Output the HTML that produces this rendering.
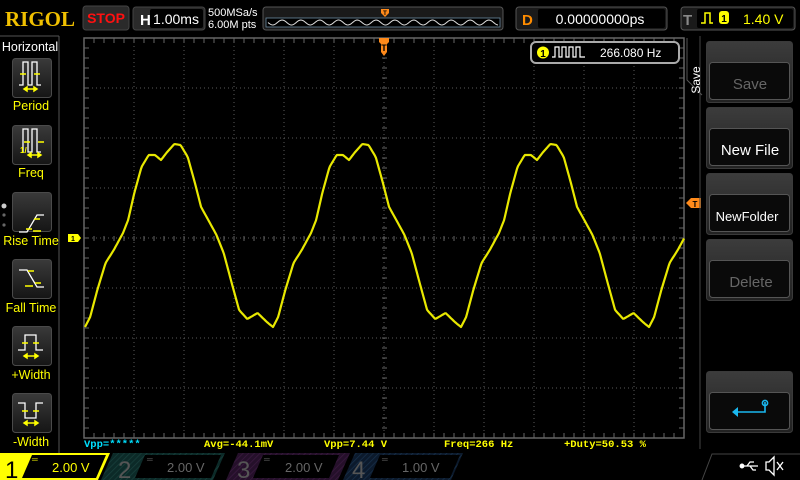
<!DOCTYPE html>
<html><head><meta charset="utf-8"><style>
html,body{margin:0;padding:0;background:#000;width:800px;height:480px;overflow:hidden}
svg{display:block}
text{font-family:"Liberation Sans",sans-serif}
.m{font-family:"Liberation Mono",monospace;font-size:10.5px;font-weight:bold}
</style></head><body>
<svg id="s" width="800" height="480" viewBox="0 0 800 480" xmlns="http://www.w3.org/2000/svg">
<defs>
<linearGradient id="bg" x1="0" y1="0" x2="0" y2="1"><stop offset="0" stop-color="#3a3a3a"/><stop offset="1" stop-color="#151515"/></linearGradient>
<linearGradient id="hd" x1="0" y1="0" x2="0" y2="1"><stop offset="0" stop-color="#3c3c3c"/><stop offset="1" stop-color="#222"/></linearGradient>
<pattern id="h2" width="4" height="4" patternUnits="userSpaceOnUse" patternTransform="rotate(45)"><rect width="4" height="4" fill="#0c2a28"/><line x1="0" y1="0" x2="0" y2="4" stroke="#18403c" stroke-width="1.5"/></pattern>
<pattern id="h3" width="4" height="4" patternUnits="userSpaceOnUse" patternTransform="rotate(45)"><rect width="4" height="4" fill="#25102a"/><line x1="0" y1="0" x2="0" y2="4" stroke="#3a1a40" stroke-width="1.5"/></pattern>
<pattern id="h4" width="4" height="4" patternUnits="userSpaceOnUse" patternTransform="rotate(45)"><rect width="4" height="4" fill="#0c1a2c"/><line x1="0" y1="0" x2="0" y2="4" stroke="#18304a" stroke-width="1.5"/></pattern>
</defs>
<rect width="800" height="480" fill="#000"/>
<!-- top bar -->
<text x="5" y="26" font-weight="bold" font-size="21" fill="#f0c000" style="font-family:'Liberation Serif',serif">RIGOL</text>
<rect x="83" y="6" width="46" height="24" rx="3" fill="#2a2a2a" stroke="#444"/>
<text x="106" y="23" text-anchor="middle" font-size="14" font-weight="bold" fill="#ff1010">STOP</text>
<rect x="133" y="7" width="72" height="23" rx="3" fill="#2a2a2a" stroke="#444"/>
<text x="140" y="25" font-size="15" font-weight="bold" fill="#fff">H</text>
<rect x="150" y="9" width="53" height="19" rx="2" fill="#000"/>
<text x="176" y="24" text-anchor="middle" font-size="14" fill="#fff">1.00ms</text>
<text x="208" y="16" font-size="11" fill="#fff">500MSa/s</text>
<text x="208" y="28" font-size="11" fill="#fff">6.00M pts</text>
<rect x="263" y="7" width="240" height="23" rx="3" fill="#1a1a1a" stroke="#555"/>
<rect x="266" y="18" width="234" height="9" fill="#000" stroke="#6a8aa0" stroke-width="0.8"/>
<path id="ov" d="" stroke="#ddd" stroke-width="1" fill="none"/>
<path d="M381 9h8v4l-4 4l-4-4z" fill="#ff8a1a"/>
<text x="385" y="15" text-anchor="middle" font-size="6" fill="#000" font-weight="bold">T</text>
<rect x="516" y="7" width="151" height="23" rx="3" fill="#1a1a1a" stroke="#555"/>
<text x="522" y="25" font-size="15" font-weight="bold" fill="#ff8c00">D</text>
<rect x="538" y="9" width="127" height="19" rx="2" fill="#000"/>
<text x="600" y="24" text-anchor="middle" font-size="14" fill="#fff">0.00000000ps</text>
<rect x="681" y="7" width="114" height="23" rx="3" fill="#1a1a1a" stroke="#555"/>
<text x="683" y="25" font-size="15" font-weight="bold" fill="#888">T</text>
<rect x="697" y="9" width="96" height="19" rx="2" fill="#000"/>
<path d="M701 23h4v-10h5v10h3" stroke="#ffff00" stroke-width="1.5" fill="none"/>
<rect x="719" y="11" width="10" height="13" rx="3" fill="#ffff00"/>
<text x="724" y="22" text-anchor="middle" font-size="10" font-weight="bold" fill="#000">1</text>
<text x="743" y="24" font-size="14" fill="#ffff00">1.40 V</text>
<!-- left panel -->
<line x1="59" y1="36" x2="59" y2="480" stroke="#555"/>
<line x1="0" y1="36" x2="59" y2="36" stroke="#555"/>
<text x="30" y="51" text-anchor="middle" font-size="12.5" fill="#fff">Horizontal</text>
<g id="btns"></g>
<circle cx="4" cy="206" r="2.5" fill="#ccc"/><circle cx="4" cy="215" r="1.6" fill="#666"/><circle cx="4" cy="225" r="1.6" fill="#666"/>
<text x="31" y="110" text-anchor="middle" font-size="12.5" fill="#ffff00">Period</text>
<text x="31" y="177" text-anchor="middle" font-size="12.5" fill="#ffff00">Freq</text>
<text x="31" y="245" text-anchor="middle" font-size="12.5" fill="#ffff00">Rise Time</text>
<text x="31" y="312" text-anchor="middle" font-size="12.5" fill="#ffff00">Fall Time</text>
<text x="31" y="379" text-anchor="middle" font-size="12.5" fill="#ffff00">+Width</text>
<text x="31" y="446" text-anchor="middle" font-size="12.5" fill="#ffff00">-Width</text>
<!-- icons -->
<g stroke="#fff" stroke-width="1.3" fill="none">
<path d="M19 85h4v-23h5v23h4v-23h5v23h4"/>
<path d="M23 152v-23h5v23h4v-23h5v23h4"/>
<path d="M19 232h8l10-17h7"/>
<path d="M19 270h8l10 17h7"/>
<path d="M18 350h7v-15h11v15h7"/>
<path d="M18 403h7v15h11v-15h7"/>
</g>
<g stroke="#ffff00" stroke-width="1.5" fill="#ffff00">
<path d="M20 74h6M34 74h6M24 89h13" fill="none"/><path d="M24 89l3-2v4zM37 89l-3-2v4z"/>
<path d="M24 142h6M38 142h6M28 155h13" fill="none"/><path d="M28 155l3-2v4zM41 155l-3-2v4z"/>
<path d="M26 229h6M34 219h6M33 231h8" fill="none"/>
<path d="M28 271h6M35 283h6M25 286h8" fill="none"/>
<path d="M22 343h6M33 343h6M24 356h14" fill="none"/><path d="M24 356l3-2v4zM38 356l-3-2v4z"/>
<path d="M22 411h6M33 411h6M24 423h14" fill="none"/><path d="M24 423l3-2v4zM38 423l-3-2v4z"/>
</g>
<text x="20" y="153" font-size="8" fill="#ffff00" font-weight="bold">1/</text>
<!-- grid -->
<g id="grid"></g>
<path d="M379 38h10v4l-2 2v8l-3 4l-3-4v-8l-2-2z" fill="#ff8a1a"/>
<text x="384" y="51" text-anchor="middle" font-size="9" font-weight="bold" fill="#000">T</text>
<path d="M68 234h10v8h-10z" fill="#ffff00"/><path d="M78 234l3 4l-3 4z" fill="#ffff00"/>
<text x="73" y="241" text-anchor="middle" font-size="7" font-weight="bold" fill="#000">1</text>
<path d="M686 203l5-5h10v10h-10z" fill="#ff8a1a"/>
<text x="695" y="207" text-anchor="middle" font-size="8" font-weight="bold" fill="#000">T</text>
<polyline id="wv" points="" fill="none" stroke="#e8e800" stroke-width="2.2" stroke-linejoin="round"/>
<!-- freq box -->
<rect x="531" y="42" width="148" height="21" rx="5" fill="#000" stroke="#aaa" stroke-width="2"/>
<circle cx="543" cy="52.5" r="6" fill="#ffff00"/>
<text x="543" y="57" text-anchor="middle" font-size="10" font-weight="bold" fill="#000">1</text>
<path d="M552 57h3v-10h4v10h3v-10h4v10h3v-10h4v10h3v-10h4v10h5" stroke="#fff" stroke-width="1.2" fill="none"/>
<text x="600" y="57" font-size="12" fill="#fff">266.080 Hz</text>
<!-- right panel -->
<path d="M700 36v413" stroke="#444"/>
<path d="M687 38v42l15 15" stroke="#555" fill="none"/>
<text transform="translate(700,80) rotate(-90)" text-anchor="middle" font-size="12" fill="#fff">Save</text>
<g id="rb"></g>
<text x="750" y="89" text-anchor="middle" font-size="15" fill="#666">Save</text>
<text x="750" y="155" text-anchor="middle" font-size="15" fill="#fff">New File</text>
<text x="747" y="221" text-anchor="middle" font-size="13" fill="#fff">NewFolder</text>
<text x="751" y="287" text-anchor="middle" font-size="15" fill="#666">Delete</text>
<path d="M765 402v10h-30" stroke="#1ab8f0" stroke-width="1.6" fill="none"/>
<circle cx="765" cy="403" r="2.6" fill="none" stroke="#1ab8f0" stroke-width="1.6"/>
<path d="M732 412l6-5v10z" fill="#1ab8f0"/>
<!-- measurements -->
<text class="m" x="84" y="447" fill="#00e0ff">Vpp=*****</text>
<text class="m" x="204" y="447" fill="#ffff00">Avg=-44.1mV</text>
<text class="m" x="324" y="447" fill="#ffff00">Vpp=7.44 V</text>
<text class="m" x="444" y="447" fill="#ffff00">Freq=266 Hz</text>
<text class="m" x="564" y="447" fill="#ffff00">+Duty=50.53 %</text>
<!-- channel bar -->
<path d="M0 453h110l-12 27h-98z" fill="#ffff00"/>
<text x="5" y="478" font-size="24" fill="#000">1</text>
<path d="M32 455h74l-10 23h-74z" fill="#000"/>
<text x="32" y="462" font-size="8" fill="#ffff00">═</text>
<text x="52" y="472" font-size="13" fill="#ffff00">2.00 V</text>
<path d="M113 453h112l-12 27h-112z" fill="url(#h2)"/>
<text x="118" y="478" font-size="24" fill="#555">2</text>
<path d="M145 455h76l-10 23h-76z" fill="#000"/>
<text x="147" y="462" font-size="8" fill="#666">═</text>
<text x="167" y="472" font-size="13" fill="#666">2.00 V</text>
<path d="M238 453h112l-12 27h-112z" fill="url(#h3)"/>
<text x="237" y="478" font-size="24" fill="#555">3</text>
<path d="M263 455h76l-10 23h-76z" fill="#000"/>
<text x="264" y="462" font-size="8" fill="#666">═</text>
<text x="285" y="472" font-size="13" fill="#666">2.00 V</text>
<path d="M355 453h108l-12 27h-108z" fill="url(#h4)"/>
<text x="352" y="478" font-size="24" fill="#555">4</text>
<path d="M380 455h80l-10 23h-80z" fill="#000"/>
<text x="382" y="462" font-size="8" fill="#666">═</text>
<text x="402" y="472" font-size="13" fill="#666">1.00 V</text>
<path d="M702 480l10-26h90" stroke="#444" fill="none"/>
<g stroke="#fff" stroke-width="1.3" fill="#fff">
<path d="M742 466h16M747 466l3-4h4M750 466l3 4h3" fill="none"/><circle cx="742" cy="466" r="1.8"/>
<path d="M766 462h3l5-5v18l-5-5h-3z" fill="none"/><path d="M777 462l6 8M783 462l-6 8" fill="none"/>
</g>
</svg>
<script>
var NS="http://www.w3.org/2000/svg";
function el(p,t,a){var e=document.createElementNS(NS,t);for(var k in a)e.setAttribute(k,a[k]);p.appendChild(e);return e;}
var g=document.getElementById('grid');
for(var i=1;i<12;i++){var x=84+i*50;el(g,'line',{x1:x,y1:38,x2:x,y2:438,stroke:'#5a5a5a','stroke-dasharray':'1 3'});}
for(var j=1;j<8;j++){var y=38+j*50;el(g,'line',{x1:84,y1:y,x2:684,y2:y,stroke:'#5a5a5a','stroke-dasharray':'1 3'});}
el(g,'rect',{x:84,y:38,width:600,height:400,fill:'none',stroke:'#666','stroke-width':1.5});
var d='';
for(var x=94;x<684;x+=10){d+='M'+x+' 38v5M'+x+' 438v-5M'+x+' 236v5';}
for(var y=48;y<438;y+=10){d+='M84 '+y+'h5M684 '+y+'h-5M382 '+y+'h5';}
el(g,'path',{d:d,stroke:'#666','stroke-width':1});
var b=document.getElementById('btns');
[58,125,192,259,326,393].forEach(function(y){el(b,'rect',{x:12.5,y:y+0.5,width:39,height:39,rx:3,fill:'url(#bg)',stroke:'#4a4a4a'});});
var rb=document.getElementById('rb');
[[706,41],[706,107],[706,173],[706,239],[706,371]].forEach(function(p){
el(rb,'rect',{x:p[0]+0.5,y:p[1]+0.5,width:86,height:61,rx:3,fill:'url(#hd)',stroke:'#3a3a3a'});
el(rb,'rect',{x:p[0]+3.5,y:p[1]+21.5,width:80,height:37,rx:3,fill:'#0a0a0a',stroke:'#555'});});
var P=[[0,327],[5,317],[12,290],[20,263],[28,250],[37,233],[42,220],[48,193],[55,167],[62,155],[68,155],[74,160],[80,152],[87,144],[93,145],[100,157],[107,183],[113,207],[120,220],[128,235],[135,253],[142,280],[150,310],[158,319],[168,313],[177,322],[183,327]];
var sc=188/183;P=P.map(function(p){return[p[0]*sc,p[1]]});
function f(x){var r=((x-85)%188+188)%188;for(var k=0;k<P.length-1;k++){if(r>=P[k][0]&&r<=P[k+1][0]){var t=(r-P[k][0])/(P[k+1][0]-P[k][0]);return P[k][1]+t*(P[k+1][1]-P[k][1]);}}return 327;}
var pts=[];for(var x=85;x<=684;x+=1)pts.push(x+','+f(x).toFixed(1));
document.getElementById('wv').setAttribute('points',pts.join(' '));
var o='';for(var x=268;x<=498;x++){var yy=22.5+2.5*Math.sin((x-268)/18.8*2*Math.PI);o+=(x==268?'M':'L')+x+' '+yy.toFixed(1);}
document.getElementById('ov').setAttribute('d',o);
</script>
</body></html>
